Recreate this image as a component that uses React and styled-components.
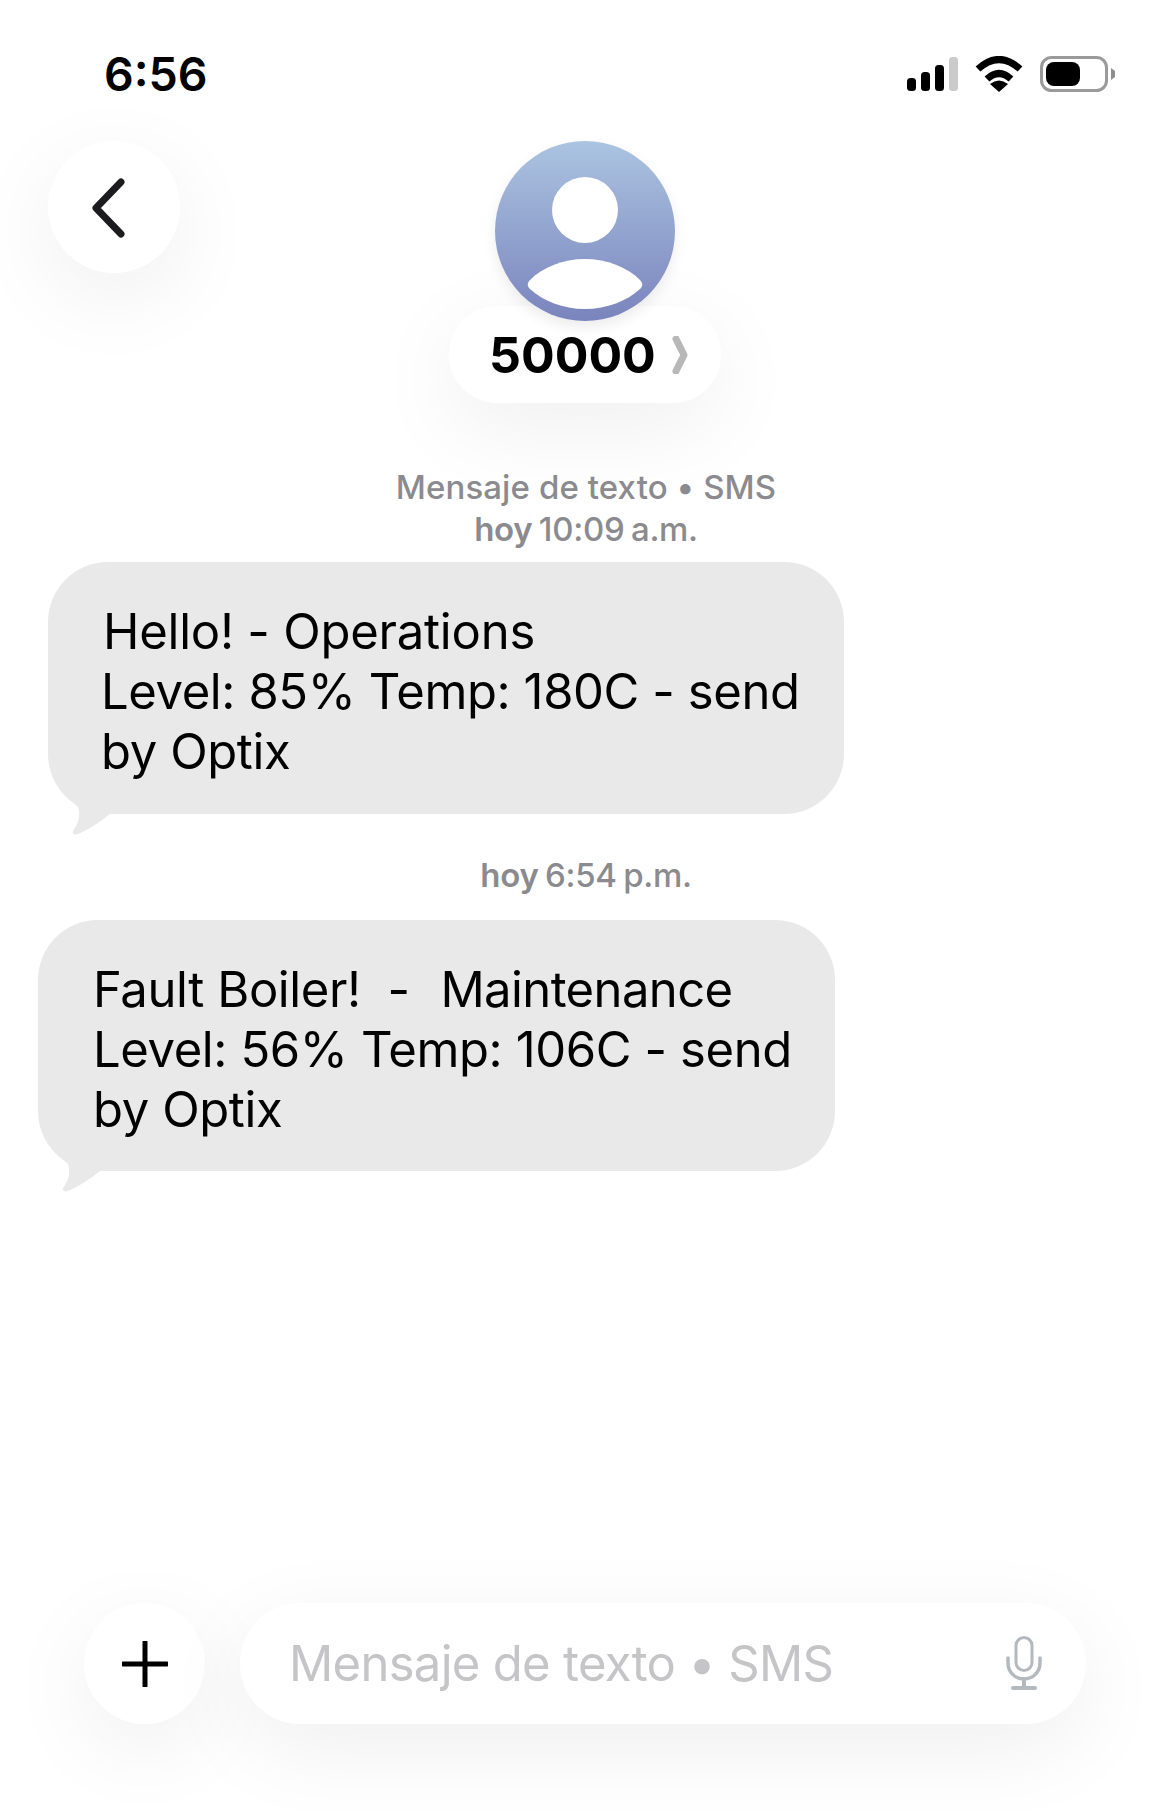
import React from "react";
import styled, { createGlobalStyle } from "styled-components";

const GlobalStyle = createGlobalStyle`
  html, body {
    margin: 0;
    padding: 0;
    background: #ffffff;
  }
  * {
    box-sizing: border-box;
  }
`;

const Page = styled.div`
  width: 1172px;
  height: 1810px;
  display: flex;
  flex-direction: column;
  overflow: hidden;
  background: #ffffff;
  color: #000000;
  font-family: Inter, "Liberation Sans", sans-serif;
`;

const StatusBar = styled.div`
  height: 141px;
  padding: 7px 57px 0 104px;
  display: flex;
  align-items: center;
  justify-content: space-between;
`;

const Clock = styled.div`
  font-size: 46.5px;
  font-weight: 600;
  line-height: 50px;
`;

const StatusIcons = styled.div`
  display: flex;
  align-items: center;
  gap: 17px;
`;

const Header = styled.div`
  display: grid;
  grid-template-columns: 1fr auto 1fr;
  padding: 0 50px 0 48px;
`;

const CircleButton = styled.div`
  width: ${(props) => props.size}px;
  height: ${(props) => props.size}px;
  flex: none;
  border-radius: 50%;
  background: #ffffff;
  display: flex;
  align-items: center;
  justify-content: center;
  box-shadow: 0 24px 90px rgba(0, 0, 0, 0.065);
`;

const Contact = styled.div`
  display: flex;
  flex-direction: column;
  align-items: center;
`;

const Avatar = styled.div`
  position: relative;
  z-index: 1;
  width: 180px;
  height: 180px;
  border-radius: 50%;
  background: linear-gradient(180deg, #abc4e1 0%, #7a84bd 100%);
  box-shadow: 0 6px 14px rgba(0, 0, 0, 0.08);
`;

const NamePill = styled.div`
  width: 272px;
  height: 97px;
  margin-top: -15px;
  padding-left: 40px;
  border-radius: 48px;
  background: #ffffff;
  display: flex;
  align-items: center;
  gap: 16px;
  box-shadow: 0 24px 90px rgba(0, 0, 0, 0.065);
`;

const NameText = styled.span`
  font-size: 50px;
  font-weight: 700;
  line-height: 56px;
`;

const Meta = styled.div`
  margin-top: ${(props) => props.top}px;
  text-align: center;
  font-size: 33px;
  font-weight: 500;
  line-height: 42px;
  letter-spacing: 0.1px;
  color: #8b8b8f;
`;

const MetaTime = styled.span`
  letter-spacing: -0.3px;
  word-spacing: -2px;
`;

const MetaStrong = styled.span`
  font-weight: 600;
`;

const Bubble = styled.div`
  position: relative;
  width: ${(props) => props.width}px;
  height: ${(props) => props.height}px;
  margin: ${(props) => props.top}px 0 0 ${(props) => props.left}px;
  padding: 40px 40px 0 54px;
  border-radius: 60px;
  background: #e9e9ea;
  font-size: 49px;
  font-weight: 400;
  line-height: 60px;
  white-space: pre;
`;

const BubbleLine = styled.div`
  margin-left: ${(props) => props.indent || 0}px;
  letter-spacing: ${(props) => props.spacing}px;
`;

const TightSpaces = styled.span`
  letter-spacing: -3.5px;
`;

const LooseWord = styled.span`
  letter-spacing: -0.6px;
`;

const Tail = styled.svg`
  position: absolute;
  left: 8px;
  bottom: -22px;
`;

const Composer = styled.div`
  margin-top: auto;
  padding: 0 86px 86px 84px;
  display: flex;
  gap: 35px;
`;

const InputPill = styled.div`
  flex: 1;
  height: 121px;
  padding: 0 44px 0 49px;
  border-radius: 61px;
  background: #ffffff;
  display: flex;
  align-items: center;
  justify-content: space-between;
  box-shadow: 0 24px 90px rgba(0, 0, 0, 0.065);
`;

const Placeholder = styled.span`
  font-size: 49px;
  line-height: 60px;
  letter-spacing: -0.7px;
  color: #c5c5c7;
`;

const Signal = () => (
  <svg width="51" height="34" viewBox="0 0 51 34">
    <rect x="0" y="21" width="9" height="13" rx="3.5" fill="#000" />
    <rect x="14" y="15" width="9" height="19" rx="3.5" fill="#000" />
    <rect x="28" y="8" width="9" height="26" rx="3.5" fill="#000" />
    <rect x="42" y="0" width="9" height="34" rx="3.5" fill="#cbcbcb" />
  </svg>
);

const Wifi = () => (
  <svg width="48" height="36" viewBox="0 0 48 36">
    <path d="M3 13 Q24 -6 45 13" fill="none" stroke="#000" strokeWidth="7" />
    <path d="M12 23 Q24 12 36 23" fill="none" stroke="#000" strokeWidth="7" />
    <path d="M24 36 L15 28 Q24 21 33 28 Z" fill="#000" />
  </svg>
);

const Battery = () => (
  <svg width="75" height="36" viewBox="0 0 75 36">
    <rect x="1.5" y="1.5" width="65" height="33" rx="10" fill="none" stroke="#9a9a9a" strokeWidth="3" />
    <rect x="6" y="6" width="34" height="24" rx="8" fill="#000" />
    <path d="M71 12 L75 15 V21 L71 24 Z" fill="#8e8e8e" />
  </svg>
);

const BackChevron = () => (
  <svg width="44" height="66" viewBox="0 0 44 66">
    <path d="M29 8 L4 34 L29 60" fill="none" stroke="#1c1c1e" strokeWidth="7" strokeLinecap="round" strokeLinejoin="round" />
  </svg>
);

const PersonIcon = () => (
  <svg width="180" height="180" viewBox="0 0 180 180">
    <circle cx="90" cy="69" r="33" fill="#fff" />
    <path d="M35 139 C48 126 68 118 90 118 C112 118 132 126 145 139 C148 142 148 145 145 148 C132 160 112 168 90 168 C68 168 48 160 35 148 C32 145 32 142 35 139 Z" fill="#fff" />
  </svg>
);

const PillChevron = () => (
  <svg width="16" height="38" viewBox="0 0 16 38">
    <path d="M4 3 L12 19 L4 35" fill="none" stroke="#b8b8b8" strokeWidth="7" strokeLinecap="round" strokeLinejoin="round" />
  </svg>
);

const BubbleTail = () => (
  <Tail width="70" height="50" viewBox="0 0 70 50">
    <path d="M6 0 C8 6 19 18 22 21 C25 30 22 38 17 45 C16 48 19 49 22 48 C32 44 44 36 54 28 L60 0 Z" fill="#e9e9ea" />
  </Tail>
);

const PlusIcon = () => (
  <svg width="46" height="46" viewBox="0 0 46 46">
    <path d="M23 1 V45 M1 23 H45" fill="none" stroke="#000" strokeWidth="5" strokeLinecap="round" />
  </svg>
);

const MicIcon = () => (
  <svg width="36" height="55" viewBox="0 0 36 55">
    <rect x="10" y="1.5" width="16" height="33" rx="8" fill="none" stroke="#b4b9c0" strokeWidth="3" />
    <path d="M2 22 V27 C2 36 9 43 18 43 C27 43 34 36 34 27 V22" fill="none" stroke="#b4b9c0" strokeWidth="3.5" strokeLinecap="round" />
    <path d="M18 43 V52 M7 52 H29" fill="none" stroke="#b4b9c0" strokeWidth="4" strokeLinecap="round" />
  </svg>
);

const App = () => {
  return (
    <Page>
      <GlobalStyle />
      <StatusBar>
        <Clock>6:56</Clock>
        <StatusIcons>
          <Signal />
          <Wifi />
          <Battery />
        </StatusIcons>
      </StatusBar>

      <Header>
        <CircleButton size={132}>
          <BackChevron />
        </CircleButton>
        <Contact>
          <Avatar>
            <PersonIcon />
          </Avatar>
          <NamePill>
            <NameText>50000</NameText>
            <PillChevron />
          </NamePill>
        </Contact>
      </Header>

      <Meta top={63}>
        Mensaje de texto • SMS
        <br />
        <MetaTime>
          <MetaStrong>hoy</MetaStrong> 10:09 a.m.
        </MetaTime>
      </Meta>

      <Bubble top={12} left={48} width={796} height={252}>
        <BubbleLine indent={1} spacing={-0.23}>Hello! - Operations</BubbleLine>
        <BubbleLine indent={-1} spacing={-0.4}>Level: 85% Temp: 180C - send</BubbleLine>
        <BubbleLine indent={-1} spacing={-0.4}>by Optix</BubbleLine>
        <BubbleTail />
      </Bubble>

      <Meta top={40}>
        <MetaTime>
          <MetaStrong>hoy</MetaStrong> 6:54 p.m.
        </MetaTime>
      </Meta>

      <Bubble top={24} left={38} width={797} height={251}>
        <BubbleLine indent={1} spacing={-0.4}>
          Fault Boiler!{"  -"}
          <TightSpaces>{"   "}</TightSpaces>
          <LooseWord>Maintenance</LooseWord>
        </BubbleLine>
        <BubbleLine indent={1} spacing={-0.4}>Level: 56% Temp: 106C - send</BubbleLine>
        <BubbleLine indent={1} spacing={-0.4}>by Optix</BubbleLine>
        <BubbleTail />
      </Bubble>

      <Composer>
        <CircleButton size={121}>
          <PlusIcon />
        </CircleButton>
        <InputPill>
          <Placeholder>Mensaje de texto • SMS</Placeholder>
          <MicIcon />
        </InputPill>
      </Composer>
    </Page>
  );
};

export default App;
